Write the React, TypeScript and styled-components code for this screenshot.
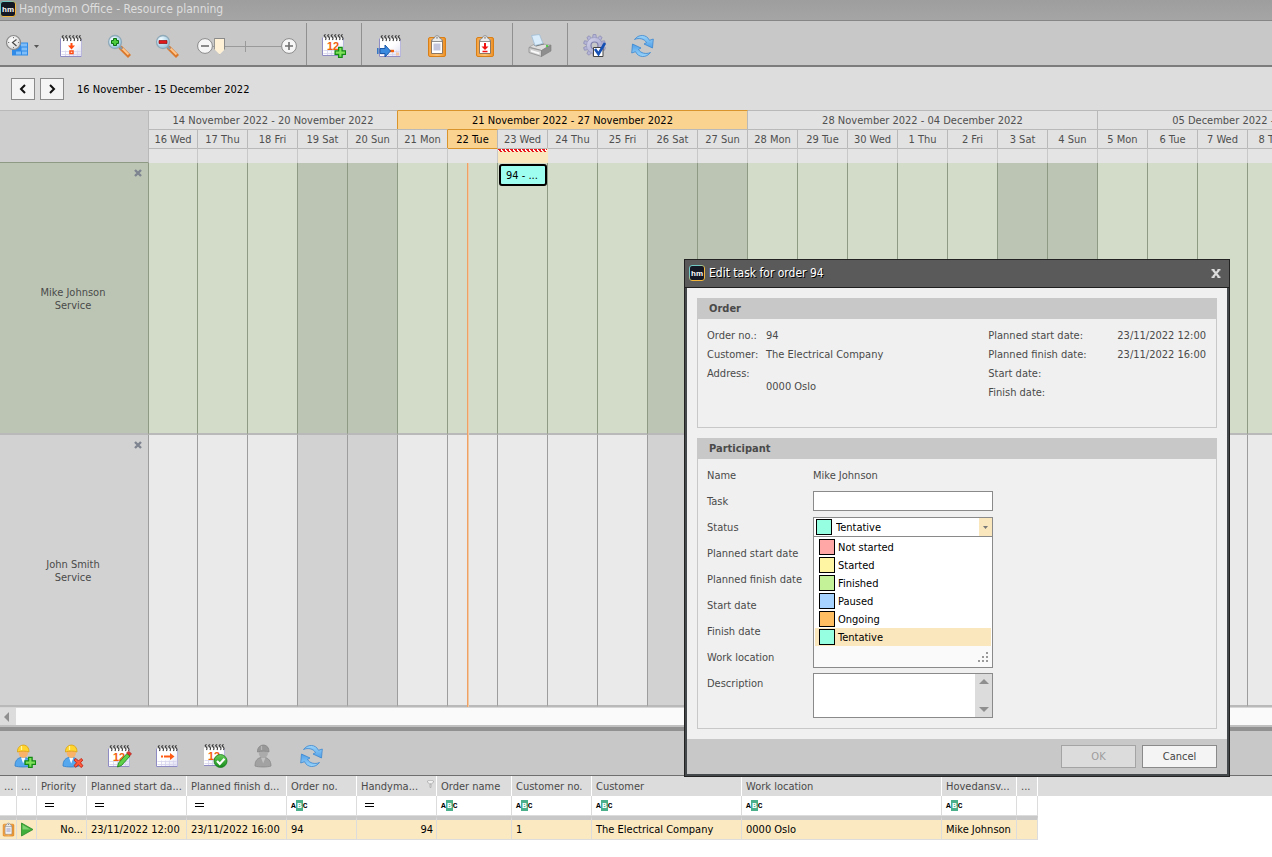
import React from "react";
import styled, { createGlobalStyle, css } from "styled-components";

const GlobalStyle = createGlobalStyle`
  * { box-sizing: border-box; }
  body {
    margin: 0;
    background: #fff;
    color: #4a4a4a;
    font-family: "DejaVu Sans Condensed", Tahoma, "DejaVu Sans", sans-serif;
    font-size: 11px;
    line-height: 13px;
  }
  button, input, select, textarea {
    font: inherit;
    color: inherit;
    margin: 0;
    border-radius: 0;
  }
`;

/* ---------- shell ---------- */

const Shell = styled.div`
  position: relative;
  display: flex;
  flex-direction: column;
  min-height: 100vh;
  overflow: hidden;
`;

const TitleBar = styled.header`
  display: flex;
  align-items: center;
  gap: 3px;
  height: 21px;
  padding-bottom: 2px;
  background: linear-gradient(#9e9e9e, #a5a5a5);
  border-bottom: 1px solid #868686;
  color: #dedede;
`;

const AppTitle = styled.h1`
  margin: 0;
  font-size: 12px;
  line-height: 16px;
  font-weight: 400;
`;

const Toolbar = styled.div<{ $lower?: boolean }>`
  display: flex;
  height: ${(p) => (p.$lower ? 49 : 46)}px;
  background: #c8c8c8;
  border-top: ${(p) => (p.$lower ? "4px solid #919191" : "none")};
  border-bottom: ${(p) => (p.$lower ? 1 : 2)}px solid #6f6f6f;
  border-bottom-color: ${(p) => (p.$lower ? "#6f6f6f" : "#7c7c7c")};
`;

const ToolGroup = styled.div<{ $pad: number; $last?: boolean }>`
  display: flex;
  align-items: center;
  margin-top: 2px;
  padding: 4px ${(p) => p.$pad}px 0;
  border-right: ${(p) => (p.$last ? "none" : "1px solid #909090")};
`;

const ToolButton = styled.button<{ $first?: boolean }>`
  display: flex;
  align-items: center;
  gap: 4px;
  width: ${(p) => (p.$first ? 47 : 48)}px;
  height: 36px;
  padding: 0 ${(p) => (p.$first ? 6 : 12)}px;
  border: 0;
  background: none;
`;

const ZoomSlider = styled.div`
  display: flex;
  align-items: center;
  width: 115px;
  padding-left: 6px;
`;

const ZoomStep = styled.button`
  display: flex;
  padding: 0;
  border: 0;
  background: none;
`;

const ZoomRange = styled.input`
  appearance: none;
  width: 68px;
  height: 20px;
  background:
    linear-gradient(#9a9a9a, #9a9a9a) 32px 50% / 1px 11px no-repeat,
    linear-gradient(#9a9a9a, #9a9a9a) 0 50% / 100% 1px no-repeat;
  &::-webkit-slider-thumb {
    appearance: none;
    width: 11px;
    height: 17px;
    background: #fff1d6;
    clip-path: polygon(0 0, 100% 0, 100% 68%, 50% 100%, 0 68%);
    box-shadow: inset 0 0 0 1px #8a8a8a;
  }
`;

const DateNav = styled.nav`
  display: flex;
  align-items: center;
  height: 43px;
  padding: 1px 11px 0;
  background: #dddddd;
  color: #000;
`;

const StepButton = styled.button`
  display: flex;
  align-items: center;
  justify-content: center;
  width: 24px;
  height: 22px;
  margin-right: 5px;
  padding: 0;
  background: #f4f4f4;
  border: 1px solid #8a8a8a;
`;

const RangeText = styled.span`
  margin-left: 8px;
`;

/* ---------- scheduler ---------- */

const Scheduler = styled.main`
  flex: 1;
  display: flex;
  flex-direction: column;
  overflow: hidden;
`;

const SchedulerRow = styled.section<{ $grow?: boolean }>`
  display: flex;
  flex: ${(p) => (p.$grow ? "1 1 0" : "none")};
`;

const Corner = styled.div`
  flex: none;
  width: 149px;
  background: #cecece;
  border: solid #b9b9b9;
  border-width: 1px 1px 0 0;
  border-bottom: 1px solid #8f9a85;
`;

const Track = styled.div`
  flex: 1;
  display: flex;
  flex-direction: column;
  min-width: 0;
  position: relative;
  overflow: hidden;
`;

const Strip = styled.div<{ $grow?: boolean }>`
  display: flex;
  flex: ${(p) => (p.$grow ? "1" : "none")};
`;

const WeekCell = styled.div<{ $days: number; $first?: boolean; $current?: boolean; $edge?: string }>`
  flex: none;
  width: ${(p) => p.$days * 50 - (p.$first ? 1 : 0)}px;
  height: 19px;
  padding-top: 3px;
  border-top: 1px solid ${(p) => (p.$current ? "#d9942b" : "#b9b9b9")};
  border-right: 1px solid ${(p) => p.$edge || "#b9b9b9"};
  background: ${(p) => (p.$current ? "#fbd391" : "#e2e2e2")};
  color: ${(p) => (p.$current ? "#000" : "#4f4f4f")};
  text-align: center;
  white-space: nowrap;
`;

const DayCell = styled.div<{ $first?: boolean; $today?: boolean; $edge?: string }>`
  flex: none;
  width: ${(p) => (p.$first ? 49 : 50)}px;
  height: 19px;
  padding-top: 3px;
  border-top: 1px solid ${(p) => (p.$today ? "#d9942b" : "#b9b9b9")};
  border-right: 1px solid ${(p) => p.$edge || "#b9b9b9"};
  background: ${(p) => (p.$today ? "#fbd391" : "#e2e2e2")};
  color: ${(p) => (p.$today ? "#000" : "#4f4f4f")};
  text-align: center;
  white-space: nowrap;
`;

const AllDayCell = styled.div<{ $first?: boolean; $today?: boolean; $selected?: boolean }>`
  flex: none;
  width: ${(p) => (p.$first ? 49 : 50)}px;
  height: 15px;
  border-top: 1px solid ${(p) => (p.$today ? "#d9942b" : "#b9b9b9")};
  border-right: 1px solid #c8c8c8;
  background: #e4e4e4;
  ${(p) =>
    p.$selected &&
    css`
      border-right-color: #fbe7bd;
      background:
        repeating-linear-gradient(90deg, #e8151b 0 3px, #fff 3px 4px) 0 0 / 100% 1px no-repeat,
        repeating-linear-gradient(90deg, #fff 0 1px, #e8151b 1px 3px, #fff 3px 4px) 0 1px / 100% 1px no-repeat,
        repeating-linear-gradient(90deg, #fbe7bd 0 2px, #e8151b 2px 4px) 0 2px / 100% 1px no-repeat,
        #fbe7bd;
    `}
`;

type Tone = "green" | "gray";
const tones = {
  green: { day: "#d3dcc9", off: "#bcc5b4", line: "#8f9a85" },
  gray: { day: "#eaeaea", off: "#d2d2d2", line: "#9d9d9d" },
};

const ResourceCell = styled.div<{ $tone: Tone }>`
  flex: none;
  display: flex;
  flex-direction: column;
  width: 149px;
  padding: 4px 5px 14px 0;
  background: ${(p) => tones[p.$tone].off};
  border-right: 1px solid ${(p) => tones[p.$tone].line};
  border-bottom: 2px solid #b9b9b9;
  text-align: center;
`;

const ResourceName = styled.div`
  display: flex;
  flex-direction: column;
  justify-content: center;
  flex: 1;
  padding-left: 3px;
`;

const RemoveButton = styled.button`
  align-self: flex-end;
  display: flex;
  width: 10px;
  height: 12px;
  padding: 2px 1px;
  border: 0;
  background: none;
`;

const TimeCell = styled.div<{ $tone: Tone; $first?: boolean; $off?: boolean }>`
  flex: none;
  width: ${(p) => (p.$first ? 49 : 50)}px;
  padding: 1px 0 0 1px;
  background: ${(p) => tones[p.$tone][p.$off ? "off" : "day"]};
  border-right: 1px solid ${(p) => tones[p.$tone].line};
  border-bottom: 2px solid #b9b9b9;
`;

const Appointment = styled.button`
  display: block;
  width: 100%;
  height: 22px;
  padding: 0 0 0 5px;
  border: 2px solid #000;
  border-radius: 3px;
  background: #9efff0;
  color: #000;
  text-align: left;
`;

/* Marks the current time over the day columns. */
const NowLine = styled.i`
  position: absolute;
  top: 0;
  bottom: 0;
  left: 318px;
  width: 2px;
  background: linear-gradient(90deg, #f0a063 50%, #efc8a4 50%);
`;

const ScrollTrack = styled.div`
  display: flex;
  height: 20px;
  background: #fafafa;
  border-top: 1px solid #d6d6d6;
  border-bottom: 2px solid #c0c0c0;
`;

const ScrollArrow = styled.button`
  display: flex;
  align-items: center;
  width: 16px;
  padding: 0 4px;
  border: 0;
  background: #dcdcdc;
`;

/* ---------- order list ---------- */

const OrderTable = styled.table`
  width: 100%;
  table-layout: fixed;
  border-spacing: 0;
  margin-bottom: 17px;
  white-space: nowrap;
`;

const HeadCell = styled.th<{ $width?: number }>`
  width: ${(p) => (p.$width ? p.$width + "px" : "auto")};
  height: 20px;
  padding: 0 0 0 4px;
  overflow: hidden;
  background: #dcdcdc;
  border-right: ${(p) => (p.$width ? "1px solid #fff" : "none")};
  font-weight: 400;
  text-align: left;
`;

const HeadContent = styled.span`
  display: flex;
  justify-content: space-between;
  padding-right: 2px;
`;

const FilterCell = styled.td<{ $filler?: boolean }>`
  height: 20px;
  padding: 0 0 0 4px;
  ${(p) => !p.$filler && "border: solid #dcdcdc; border-width: 0 1px 1px 0;"}
`;

const DataCell = styled.td<{ $right?: boolean; $icon?: boolean }>`
  height: 24px;
  padding: ${(p) => (p.$icon ? "0" : "0 3px 0 4px")};
  overflow: hidden;
  background: #fbe9c1;
  border-top: 4px solid #c8c8c8;
  border-right: 1px solid #dcdcdc;
  border-bottom: 1px solid #dcdcdc;
  color: #000;
  text-align: ${(p) => (p.$right ? "right" : "left")};
  svg { margin: 0 auto; }
`;

const TextFilter = styled.span`
  display: flex;
  align-items: center;
  height: 11px;
  color: #000;
  font-family: "Liberation Mono", monospace;
  font-size: 8px;
  font-weight: 700;
  line-height: 11px;
`;

const TextFilterKey = styled.span`
  width: 7px;
  background: #4caf8c;
  color: #fff;
  text-align: center;
`;

/* ---------- dialog ---------- */

const Dialog = styled.section`
  position: absolute;
  top: 259px;
  left: 684px;
  width: 546px;
  border: 1px solid #232323;
  background: #45484a;
`;

const DialogTitle = styled.header`
  display: flex;
  align-items: center;
  gap: 4px;
  height: 28px;
  padding: 0 8px 1px 4px;
  background: #5a5a5a;
  border-bottom: 1px solid #1f1f1f;
  color: #fff;
`;

const DialogHeading = styled.h2`
  flex: 1;
  margin: 0;
  font-size: 12px;
  line-height: 16px;
  font-weight: 400;
  text-shadow: 1px 1px 0 #000;
`;

const CloseButton = styled.button`
  display: flex;
  padding: 0;
  border: 0;
  background: none;
`;

const DialogBody = styled.div`
  display: flex;
  flex-direction: column;
  gap: 10px;
  margin: 0 2px;
  padding: 10px;
  background: #f0f0f0;
`;

const Group = styled.fieldset`
  margin: 0;
  padding: 0;
  min-width: 0;
  border: 1px solid #c8c8c8;
  border-top: 0;
`;

const GroupTitle = styled.h3`
  margin: 0;
  height: 21px;
  padding: 4px 11px;
  background: #c8c8c8;
  font-size: 11px;
  line-height: 13px;
`;

const OrderDetails = styled.div`
  display: flex;
  justify-content: space-between;
  height: 108px;
  padding: 10px 10px 0 9px;
`;

const Facts = styled.dl<{ $label: number }>`
  display: grid;
  grid-template-columns: ${(p) => p.$label}px auto;
  grid-auto-rows: 13px;
  row-gap: 6px;
  margin: 0;
`;

const FactValue = styled.dd`
  margin: 0;
  white-space: pre;
`;

const FormRows = styled.div`
  display: grid;
  grid-template-columns: 106px 180px;
  grid-auto-rows: 26px;
  padding: 3px 9px 6px;
`;

const FieldLabel = styled.label`
  padding-top: 7px;
`;

const FieldText = styled.output`
  padding-top: 7px;
`;

const TextField = styled.input`
  height: 20px;
  margin-top: 3px;
  padding: 0 4px;
  border: 1px solid #8a8a8a;
  background: #fff;
`;

const StatusField = styled.div`
  position: relative;
  height: 20px;
  margin-top: 3px;
  color: #000;
`;

const StatusSelect = styled.select`
  appearance: none;
  display: block;
  width: 100%;
  height: 20px;
  padding: 0 14px 0 22px;
  border: 1px solid #8a8a8a;
  outline: 0;
  background: #fff;
`;

const Swatch = styled.i<{ $color: string }>`
  width: 16px;
  height: 16px;
  border: 1px solid #000;
  background: ${(p) => p.$color};
`;

const FieldSwatch = styled(Swatch)`
  position: absolute;
  top: 2px;
  left: 3px;
`;

const DropMark = styled.span`
  position: absolute;
  top: 1px;
  right: 1px;
  display: flex;
  align-items: center;
  justify-content: center;
  width: 13px;
  height: 18px;
  background: #fbe7bd;
  pointer-events: none;
`;

const StatusPopup = styled.div`
  position: absolute;
  z-index: 1;
  top: 19px;
  left: 0;
  right: 0;
  border: 1px solid #8a8a8a;
  background: #fff;
`;

const StatusOptions = styled.ul`
  margin: 0;
  padding: 1px 1px 0;
  list-style: none;
`;

const StatusOption = styled.li<{ $active?: boolean }>`
  display: flex;
  align-items: center;
  gap: 3px;
  height: 18px;
  padding-left: 4px;
  background: ${(p) => (p.$active ? "#fbe7bd" : "#fff")};
`;

const PopupFoot = styled.div`
  display: flex;
  justify-content: flex-end;
  align-items: flex-end;
  height: 21px;
  padding: 4px;
  background: #fafafa;
`;

const Description = styled.div`
  display: flex;
  height: 45px;
  margin-top: 3px;
  border: 1px solid #8a8a8a;
  background: #fff;
`;

const DescriptionText = styled.textarea`
  flex: 1;
  min-width: 0;
  padding: 2px 4px;
  border: 0;
  resize: none;
  background: #fff;
`;

const DescriptionScroll = styled.div`
  display: flex;
  flex-direction: column;
  justify-content: space-between;
  align-items: center;
  width: 17px;
  padding: 5px 0;
  background: #dcdcdc;
`;

const DescriptionSpan = styled.div`
  grid-row: span 2;
`;

const DialogFoot = styled.footer`
  display: flex;
  justify-content: flex-end;
  gap: 6px;
  height: 35px;
  margin: 0 2px 2px;
  padding: 6px 10px 0;
  background: #c8c8c8;
`;

const DialogButton = styled.button`
  width: 75px;
  height: 23px;
  padding: 0;
  border: 1px solid #8a8a8a;
  background: #f4f4f4;
  color: #444;
  &:disabled {
    border-color: #a4a4a4;
    background: #dcdcdc;
    color: #9c9c9c;
  }
`;

/* ---------- icons ---------- */

const Svg = styled.svg`
  flex: none;
  display: block;
`;

const HiddenSvg = styled.svg`
  position: absolute;
`;

const Icon = ({ children, size = 24 }: { children: React.ReactNode; size?: number }) => (
  <Svg width={size} height={size} viewBox="0 0 24 24" fill="none" aria-hidden="true">
    {children}
  </Svg>
);

const Defs = () => (
  <HiddenSvg width="0" height="0" aria-hidden="true">
    <defs>
      <linearGradient id="frame" x1="0" y1="0" x2="1" y2="1">
        <stop offset="0.3" stopColor="#6fc8c4" />
        <stop offset="0.6" stopColor="#f2b63c" />
      </linearGradient>
      <linearGradient id="page" x1="0" y1="0" x2="1" y2="1">
        <stop offset="0.5" stopColor="#ffffff" />
        <stop offset="1" stopColor="#dcdcf2" />
      </linearGradient>
      <linearGradient id="blue" x1="0" y1="0" x2="0" y2="1">
        <stop offset="0" stopColor="#9ad4fa" />
        <stop offset="1" stopColor="#4f9fe8" />
      </linearGradient>
      <linearGradient id="orange" x1="0" y1="0" x2="1" y2="0">
        <stop offset="0" stopColor="#f6a03c" />
        <stop offset="0.5" stopColor="#fcc070" />
        <stop offset="1" stopColor="#ee8f22" />
      </linearGradient>
      <radialGradient id="lens" cx="0.35" cy="0.3" r="0.8">
        <stop offset="0" stopColor="#f4fbff" />
        <stop offset="1" stopColor="#8cc0dc" />
      </radialGradient>
      <radialGradient id="face" cx="0.4" cy="0.35" r="0.7">
        <stop offset="0" stopColor="#fff" />
        <stop offset="1" stopColor="#d6d6d6" />
      </radialGradient>
      <linearGradient id="metal" x1="0" y1="0" x2="1" y2="1">
        <stop offset="0" stopColor="#d6d6ec" />
        <stop offset="1" stopColor="#9c9cc6" />
      </linearGradient>
      <linearGradient id="green" x1="0" y1="0" x2="0" y2="1">
        <stop offset="0" stopColor="#6ad05a" />
        <stop offset="1" stopColor="#15891c" />
      </linearGradient>
    </defs>
  </HiddenSvg>
);

const Logo = () => (
  <Svg width="16" height="16" viewBox="0 0 16 16" role="img" aria-label="hm">
    <rect x="0.5" y="0.5" width="15" height="15" rx="2.5" fill="#141824" stroke="url(#frame)" />
    <text x="8" y="10.5" textAnchor="middle" fontSize="8" fontWeight="700" fill="#fff" fontFamily="Liberation Sans, sans-serif">
      hm
    </text>
  </Svg>
);

const Page = () => (
  <>
    <path d="M1.500 4.500h21v18.500h-21z" fill="url(#page)" />
    <path d="M1.500 4.500v18h21" stroke="#8f8cc4" />
    <path d="M22.500 5v17.500" stroke="#b9b8dc" />
    <path d="M2.500 17.500h19M2.500 20.500h19M6.500 16.500v5.500M10.500 16.500v5.500M14.500 16.500v5.500M18.500 16.500v5.500" stroke="#d5d3ee" strokeWidth="0.800" />
    <path d="M4.500 7c.8-1.500.5-3-.8-3.600-1-.6-.2-2 1-1.600M8 7c.8-1.500.5-3-.8-3.600-1-.6-.2-2 1-1.600M11.500 7c.8-1.500.5-3-.8-3.600-1-.6-.2-2 1-1.600M15 7c.8-1.500.5-3-.8-3.600-1-.6-.2-2 1-1.600M18.500 7c.8-1.500.5-3-.8-3.600-1-.6-.2-2 1-1.600M21.500 7c.8-1.500.5-3-.8-3.600-1-.6-.2-2 1-1.600" stroke="#333" strokeWidth="1.100" />
  </>
);

const Twelve = () => (
  <text x="6" y="16.500" fontSize="11" fontWeight="700" fill="#f2600c" fontFamily="Liberation Sans, sans-serif">
    12
  </text>
);

const Plus = () => (
  <path d="M17.500 14h3.500v3.500h3.500v3.500h-3.500v3h-3.500v-3h-3.500v-3.500h3.500z" fill="#7fe05a" stroke="#128a14" strokeWidth="1.300" transform="translate(-0.900 -0.700)" />
);

const ViewIcon = () => (
  <Icon>
    <path d="M9 8.500h13v13h-16v-6z" fill="#2f8ae8" />
    <path d="M15 9.500h6v3h-6zM15.500 13.500h5.500v3h-5.500zM10 17.500h5v3h-5zM16 17.500h5v3h-5z" fill="#7fbdf8" />
    <circle cx="7.500" cy="8.500" r="7" fill="url(#face)" stroke="#8b8b8b" strokeWidth="1.200" />
    <path d="M10.500 5.500l-4 3 4 3.500" stroke="#4a4a4a" strokeWidth="1.200" />
    <path d="M7.500 3v1.200M7.500 13v1.200M2 8.500h1.200M12 8.500h1.200" stroke="#777" />
  </Icon>
);

const CalendarTodayIcon = () => (
  <Icon>
    <Page />
    <path d="M12.500 9v4" stroke="#ff4a10" strokeWidth="2" />
    <path d="M9 11.500l3.500 4 3.500-4z" fill="#ff4a10" />
    <path d="M11 17h3v2.500h-3z" stroke="#ff4a10" strokeWidth="1.400" fill="#fff" />
  </Icon>
);

const ZoomIcon = ({ minus }: { minus?: boolean }) => (
  <Icon>
    <path d="M14.500 14.500l6.500 6.500" stroke="#d9772a" strokeWidth="4.200" strokeLinecap="square" />
    <path d="M15.500 14.500l6 6" stroke="#ffc58a" strokeWidth="1.800" />
    <path d="M12.500 12.500l2.500 2.500" stroke="#8a98a6" strokeWidth="2.500" />
    <circle cx="8" cy="8" r="6.500" fill="url(#lens)" stroke="#8fa9b8" strokeWidth="1.300" />
    {minus ? (
      <path d="M4 6.500h8v3h-8z" fill="#e0181c" stroke="#8c0d10" strokeWidth="0.700" />
    ) : (
      <path d="M6.500 4.500h3v2h2v3h-2v2h-3v-2h-2v-3h2z" fill="#4ccc3c" stroke="#0a7012" />
    )}
  </Icon>
);

const CalendarAddIcon = () => (
  <Icon>
    <g transform="translate(-1 -1)">
      <Page />
      <Twelve />
    </g>
    <Plus />
  </Icon>
);

const CalendarMoveIcon = () => (
  <Icon>
    <g transform="translate(1 0)">
      <Page />
    </g>
    <path d="M13 17h4" stroke="#f2600c" strokeWidth="2.400" />
    <path d="M19 18.500h3v3h-3z" fill="#f3c7a8" />
    <path d="M3 14.500h5v-3.500l5.500 6-5.500 6v-3.500h-5z" fill="#3a8ae0" stroke="#1a58a8" />
    <path d="M0.800 14v6" stroke="#2f72c4" strokeWidth="1.500" />
  </Icon>
);

const ClipboardIcon = ({ arrow, size }: { arrow?: boolean; size?: number }) => (
  <Icon size={size}>
    <rect x="3.500" y="3.500" width="17" height="19" rx="1.500" fill="url(#orange)" stroke="#d97f18" />
    <path d="M6.500 6.500h11v13h-11z" fill="#fff" stroke="#8d7760" />
    {arrow ? (
      <>
        <path d="M12 9v5" stroke="#f01010" strokeWidth="2" />
        <path d="M8.500 12.500h7l-3.500 3.500z" fill="#f01010" />
        <path d="M9.500 17.500h5" stroke="#f01010" strokeWidth="1.500" />
      </>
    ) : (
      <path d="M8.500 9.500h7v7h-7z" fill="#c3c6dc" />
    )}
    <path d="M7 7.500v-2l2.500-1.500c0-3 5-3 5 0l2.500 1.500v2z" fill="#e9e9e9" stroke="#868686" strokeWidth="0.900" />
    <circle cx="12" cy="3.800" r="0.900" fill="#8d8d8d" />
  </Icon>
);

const PrinterIcon = () => (
  <Icon>
    <path d="M1.500 13l6.500-4 14.500 2-9 5.500z" fill="#dedede" stroke="#9a9a9a" strokeWidth="0.700" />
    <path d="M5.500 11l9.500-1.500 1.500.8-8.500 2.200z" fill="#6f6f6f" />
    <path d="M3.500 1.500l8-1 3.500 9-8 2z" fill="#d9ecfb" stroke="#9fbdd4" strokeWidth="0.800" />
    <path d="M1 13.500l12.500 3v6l-12.500-4z" fill="#d0d0d0" stroke="#858585" strokeWidth="0.700" />
    <path d="M13.500 16.500l9.500-5.500v6l-9.500 5.500z" fill="#8e8e8e" stroke="#7c7c7c" strokeWidth="0.600" />
    <path d="M3 16l8.500 2.500v2l-8.500-2.700z" fill="#fafafa" />
    <path d="M18 11.800l2.200.3" stroke="#45c93a" strokeWidth="1.800" />
  </Icon>
);

const TEETH = [0, 36, 72, 108, 144, 180, 216, 252, 288, 324];
const GearIcon = () => (
  <Icon>
    {TEETH.map((a) => (
      <path key={a} d="M9.500 4.500l.6-4h2.800l.6 4z" fill="#b4b4d6" stroke="#8a8ab4" strokeWidth="0.700" transform={`rotate(${a} 11.500 11.500)`} />
    ))}
    <circle cx="11.500" cy="11.500" r="8" fill="url(#metal)" stroke="#9292ba" strokeWidth="0.600" />
    <circle cx="11.500" cy="11.500" r="3.500" fill="#c8c8c8" stroke="#7f7fac" strokeWidth="1.200" />
    <path d="M10.500 13.500h9.500v9h-9.500z" fill="#fff" stroke="#444" />
    <path d="M12 15l3.500 5 6.500-11" stroke="#1450b4" strokeWidth="2.600" />
  </Icon>
);

const RefreshArrow = () => (
  <path d="M3.500 5.500c4-5.500 12-5.500 15 .8l3.800-1.300-.8 9-8.500-4 2.500-1.300c-2-4-7.500-5.200-12-3.200z" fill="url(#blue)" stroke="#3b86cf" strokeWidth="0.800" strokeLinejoin="round" />
);

const RefreshIcon = () => (
  <Icon>
    <RefreshArrow />
    <g transform="rotate(180 11.500 12)">
      <RefreshArrow />
    </g>
  </Icon>
);

const Worker = ({ muted }: { muted?: boolean }) => (
  <>
    <path d="M2 22.500c0-6 3-8 6-8.500h4c3 .5 6 3 6 8.500-3 1.300-13 1.300-16 0z" fill={muted ? "#a2a2a2" : "#55a8ee"} stroke={muted ? "#8a8a8a" : "#2f7fca"} strokeWidth="0.800" />
    <path d="M8 14l2.200 6 2.300-6z" fill={muted ? "#c2c2c2" : "#f6fbff"} />
    <ellipse cx="10.300" cy="9.500" rx="4.600" ry="5" fill={muted ? "#ababab" : "#f8b26a"} />
    <path d="M4.500 8.500c-.5-9 12-9.500 11.500 0-3-1.200-8-1.200-11.500 0z" fill={muted ? "#989898" : "#ffd52e"} stroke={muted ? "#868686" : "#d9a010"} strokeWidth="0.800" />
    <path d="M8.500 2.500v4" stroke={muted ? "#b8b8b8" : "#fff3a6"} strokeWidth="1.200" />
  </>
);

const WorkerAddIcon = () => (
  <Icon>
    <g transform="translate(1 -0.500)">
      <Worker />
    </g>
    <Plus />
  </Icon>
);

const WorkerRemoveIcon = () => (
  <Icon>
    <g transform="translate(1 -0.500)">
      <Worker />
    </g>
    <path d="M14 16l2-1.500 2.500 2.500 2.500-2.500 1.800 1.500-2.300 2.800 2.500 3-2 1.700-2.500-2.700-2.700 2.500-1.800-1.700 2.500-2.800z" fill="#ff5a3c" stroke="#c42010" strokeWidth="0.900" />
  </Icon>
);

const WorkerIcon = () => (
  <Icon>
    <g transform="translate(1 -0.500)">
      <Worker muted />
    </g>
  </Icon>
);

const CalendarEditIcon = () => (
  <Icon>
    <g transform="translate(-1 0)">
      <Page />
      <Twelve />
    </g>
    <path d="M19 9.500l3 2.500-8.500 9.500-4 1.500 1-4z" fill="#5fd04a" stroke="#1d8a1c" strokeWidth="0.900" />
    <path d="M18.500 9l2-1.800 3 2.500-1.500 2z" fill="#e0392c" stroke="#a81d14" strokeWidth="0.600" />
  </Icon>
);

const CalendarForwardIcon = () => (
  <Icon>
    <g transform="translate(-1 0)">
      <Page />
    </g>
    <path d="M5 12.500h2M8 12.500h7" stroke="#ff5a14" strokeWidth="2" />
    <path d="M14 9l4.500 3.500-4.500 3.500z" fill="#ff5a14" />
  </Icon>
);

const CalendarDoneIcon = () => (
  <Icon>
    <g transform="translate(-2 -1)">
      <Page />
      <Twelve />
    </g>
    <circle cx="16.500" cy="17" r="6.500" fill="url(#green)" stroke="#187a1c" strokeWidth="0.800" />
    <path d="M13 17l2.800 2.800 4.700-5" stroke="#fff" strokeWidth="2.200" />
  </Icon>
);

const Triangle = ({ points, w, h, fill = "#8f8f8f" }: { points: string; w: number; h: number; fill?: string }) => (
  <Svg width={w} height={h} aria-hidden="true">
    <polygon points={points} fill={fill} />
  </Svg>
);

const RoundStep = ({ plus }: { plus?: boolean }) => (
  <Svg width="16" height="16" viewBox="0 0 16 16" aria-hidden="true">
    <circle cx="8" cy="8" r="7.400" fill="#f6f6f6" stroke="#8a8a8a" />
    <path d={plus ? "M4 8h8M8 4v8" : "M4 8h8"} stroke="#6f6f6f" strokeWidth="1.600" />
  </Svg>
);

const Chevron = ({ d }: { d: string }) => (
  <Svg width="8" height="10" viewBox="0 0 8 10" fill="none" aria-hidden="true">
    <path d={d} stroke="#111" strokeWidth="2" />
  </Svg>
);

const CrossIcon = () => (
  <Svg width="8" height="8" viewBox="0 0 8 8" aria-hidden="true">
    <path d="M1 1l6 6M7 1l-6 6" stroke="#7e8490" strokeWidth="2.400" />
  </Svg>
);

const CloseIcon = () => (
  <Svg width="10" height="9" viewBox="0 0 10 9" aria-hidden="true">
    <path d="M2 1l6 7M8 1l-6 7" stroke="#dcdcdc" strokeWidth="2.200" />
    <path d="M0.500 0.800h3M6.500 0.800h3M0.500 8.200h3M6.500 8.200h3" stroke="#dcdcdc" strokeWidth="1.400" />
  </Svg>
);

const EqualsIcon = () => (
  <Svg width="17" height="5" aria-hidden="true">
    <path d="M4 0h9v1h-9zM4 3h9v1h-9z" fill="#000" />
  </Svg>
);

const FunnelIcon = () => (
  <Svg width="7" height="8" viewBox="0 0 7 8" fill="none" aria-hidden="true">
    <path d="M0.500 1c0-.8 6-.8 6 0v1l-2 2h-2l-2-2zM3 4h1v3.500h-1z" stroke="#b4b4b4" fill="#f0f0f0" />
  </Svg>
);

const PlayIcon = () => (
  <Svg width="14" height="15" viewBox="0 0 14 15" aria-hidden="true">
    <path d="M1.500 1l11.500 6.500-11.500 6.500z" fill="#3fae3a" stroke="#2a8a2a" strokeWidth="0.800" />
    <path d="M2.500 2.800l8 4.700h-8z" fill="#7ed070" />
  </Svg>
);

const GripIcon = () => (
  <Svg width="11" height="11" aria-hidden="true">
    <path d="M9 0h2v2h-2zM5 4h2v2h-2zM9 4h2v2h-2zM1 8h2v2h-2zM5 8h2v2h-2zM9 8h2v2h-2z" fill="#9a9a9a" />
  </Svg>
);

/* ---------- data ---------- */

const weeks = [
  { text: "14 November 2022 - 20 November 2022", days: 5 },
  { text: "21 November 2022 - 27 November 2022", days: 7 },
  { text: "28 November 2022 - 04 December 2022", days: 7 },
  { text: "05 December 2022 - 11 December 2022", days: 7 },
];

const days = [
  "16 Wed", "17 Thu", "18 Fri", "19 Sat", "20 Sun", "21 Mon", "22 Tue", "23 Wed", "24 Thu", "25 Fri",
  "26 Sat", "27 Sun", "28 Mon", "29 Tue", "30 Wed", "1 Thu", "2 Fri", "3 Sat", "4 Sun", "5 Mon",
  "6 Tue", "7 Wed", "8 Thu", "9 Fri", "10 Sat", "11 Sun",
];
const TODAY = 6;
const TASK_DAY = 7;

const resources: { name: string; tone: Tone; task?: string }[] = [
  { name: "Mike Johnson", tone: "green", task: "94 - ..." },
  { name: "John Smith", tone: "gray" },
];

const statuses = [
  { name: "Not started", color: "#ffa6a6" },
  { name: "Started", color: "#fff5a3" },
  { name: "Finished", color: "#c3f299" },
  { name: "Paused", color: "#a6d3ff" },
  { name: "Ongoing", color: "#ffbe62" },
  { name: "Tentative", color: "#96ffe1" },
];

type Column = { title: string; width: number; filter?: "eq" | "abc"; value: React.ReactNode; right?: boolean; icon?: boolean; funnel?: boolean };
const columns: Column[] = [
  { title: "...", width: 17, value: <ClipboardIcon size={15} />, icon: true },
  { title: "...", width: 20, value: <PlayIcon />, icon: true },
  { title: "Priority", width: 50, filter: "eq", value: "No...", right: true },
  { title: "Planned start da...", width: 100, filter: "eq", value: "23/11/2022 12:00" },
  { title: "Planned finish d...", width: 100, filter: "eq", value: "23/11/2022 16:00" },
  { title: "Order no.", width: 70, filter: "abc", value: "94" },
  { title: "Handyma...", width: 80, filter: "eq", value: "94", right: true, funnel: true },
  { title: "Order name", width: 75, filter: "abc", value: "" },
  { title: "Customer no.", width: 80, filter: "abc", value: "1" },
  { title: "Customer", width: 150, filter: "abc", value: "The Electrical Company" },
  { title: "Work location", width: 200, filter: "abc", value: "0000 Oslo" },
  { title: "Hovedansv...", width: 75, filter: "abc", value: "Mike Johnson" },
  { title: "...", width: 21, value: "" },
];

/* ---------- sections ---------- */

const MainToolbar = () => (
  <Toolbar role="toolbar" aria-label="Planning">
    <ToolGroup $pad={0}>
      <ToolButton $first aria-label="View">
        <ViewIcon />
        <Triangle w={5} h={3} points="0,0 5,0 2.5,3" fill="#555" />
      </ToolButton>
      <ToolButton aria-label="Go to today"><CalendarTodayIcon /></ToolButton>
      <ToolButton aria-label="Zoom in"><ZoomIcon /></ToolButton>
      <ToolButton aria-label="Zoom out"><ZoomIcon minus /></ToolButton>
      <ZoomSlider>
        <ZoomStep aria-label="Less"><RoundStep /></ZoomStep>
        <ZoomRange type="range" aria-label="Zoom level" min={0} max={100} defaultValue={2} />
        <ZoomStep aria-label="More"><RoundStep plus /></ZoomStep>
      </ZoomSlider>
    </ToolGroup>
    <ToolGroup $pad={3}>
      <ToolButton aria-label="New task"><CalendarAddIcon /></ToolButton>
    </ToolGroup>
    <ToolGroup $pad={3}>
      <ToolButton aria-label="Go to date"><CalendarMoveIcon /></ToolButton>
      <ToolButton aria-label="Orders"><ClipboardIcon /></ToolButton>
      <ToolButton aria-label="Fetch order"><ClipboardIcon arrow /></ToolButton>
    </ToolGroup>
    <ToolGroup $pad={3}>
      <ToolButton aria-label="Print"><PrinterIcon /></ToolButton>
    </ToolGroup>
    <ToolGroup $pad={3} $last>
      <ToolButton aria-label="Settings"><GearIcon /></ToolButton>
      <ToolButton aria-label="Refresh"><RefreshIcon /></ToolButton>
    </ToolGroup>
  </Toolbar>
);

const Planner = () => (
  <Scheduler>
    <SchedulerRow>
      <Corner />
      <Track>
        <Strip>
          {weeks.map((w, i) => (
            <WeekCell key={w.text} $days={w.days} $first={i === 0} $current={i === 1} $edge={i === 0 ? "#d9942b" : undefined}>
              {w.text}
            </WeekCell>
          ))}
        </Strip>
        <Strip>
          {days.map((d, i) => (
            <DayCell key={d} $first={i === 0} $today={i === TODAY} $edge={i === TODAY - 1 ? "#d9942b" : undefined}>
              {d}
            </DayCell>
          ))}
        </Strip>
        <Strip>
          {days.map((d, i) => (
            <AllDayCell key={d} $first={i === 0} $today={i === TODAY} $selected={i === TASK_DAY} />
          ))}
        </Strip>
      </Track>
    </SchedulerRow>
    {resources.map((r) => (
      <SchedulerRow key={r.name} $grow>
        <ResourceCell $tone={r.tone}>
          <RemoveButton aria-label={"Remove " + r.name}><CrossIcon /></RemoveButton>
          <ResourceName>
            <span>{r.name}</span>
            <span>Service</span>
          </ResourceName>
        </ResourceCell>
        <Track>
          <Strip $grow>
            {days.map((d, i) => (
              <TimeCell key={d} $tone={r.tone} $first={i === 0} $off={/Sat|Sun/.test(d)}>
                {r.task && i === TASK_DAY && <Appointment>{r.task}</Appointment>}
              </TimeCell>
            ))}
          </Strip>
          <NowLine />
        </Track>
      </SchedulerRow>
    ))}
    <ScrollTrack>
      <ScrollArrow aria-label="Scroll left"><Triangle w={5} h={10} points="5,0 5,10 0,5" /></ScrollArrow>
    </ScrollTrack>
  </Scheduler>
);

const OrderList = () => (
  <OrderTable>
    <thead>
      <tr>
        {columns.map((c, i) => (
          <HeadCell key={i} $width={c.width} scope="col">
            {c.funnel ? <HeadContent>{c.title}<FunnelIcon /></HeadContent> : c.title}
          </HeadCell>
        ))}
        <HeadCell aria-hidden="true" />
      </tr>
    </thead>
    <tbody>
      <tr>
        {columns.map((c, i) => (
          <FilterCell key={i}>
            {c.filter === "eq" && <EqualsIcon />}
            {c.filter === "abc" && <TextFilter>A<TextFilterKey>B</TextFilterKey>C</TextFilter>}
          </FilterCell>
        ))}
        <FilterCell $filler />
      </tr>
      <tr>
        {columns.map((c, i) => (
          <DataCell key={i} $right={c.right} $icon={c.icon}>{c.value}</DataCell>
        ))}
        <td />
      </tr>
    </tbody>
  </OrderTable>
);

const TaskDialog = () => (
  <Dialog role="dialog" aria-labelledby="dialog-title">
    <DialogTitle>
      <Logo />
      <DialogHeading id="dialog-title">Edit task for order 94</DialogHeading>
      <CloseButton aria-label="Close"><CloseIcon /></CloseButton>
    </DialogTitle>
    <DialogBody>
      <Group>
        <GroupTitle>Order</GroupTitle>
        <OrderDetails>
          <Facts $label={59}>
            <dt>Order no.:</dt><FactValue>94</FactValue>
            <dt>Customer:</dt><FactValue>The Electrical Company</FactValue>
            <dt>Address:</dt><FactValue>{"\n0000 Oslo"}</FactValue>
          </Facts>
          <Facts $label={129}>
            <dt>Planned start date:</dt><FactValue>23/11/2022 12:00</FactValue>
            <dt>Planned finish date:</dt><FactValue>23/11/2022 16:00</FactValue>
            <dt>Start date:</dt><FactValue />
            <dt>Finish date:</dt><FactValue />
          </Facts>
        </OrderDetails>
      </Group>
      <Group>
        <GroupTitle>Participant</GroupTitle>
        <FormRows>
          <FieldLabel htmlFor="name">Name</FieldLabel>
          <FieldText id="name">Mike Johnson</FieldText>
          <FieldLabel htmlFor="task">Task</FieldLabel>
          <TextField id="task" type="text" />
          <FieldLabel htmlFor="status">Status</FieldLabel>
          <StatusField>
            <StatusSelect id="status" defaultValue="Tentative">
              {statuses.map((s) => <option key={s.name}>{s.name}</option>)}
            </StatusSelect>
            <FieldSwatch $color="#96ffe1" />
            <DropMark><Triangle w={5} h={3} points="0,0 5,0 2.5,3" fill="#777" /></DropMark>
            <StatusPopup>
              <StatusOptions role="listbox" aria-label="Status">
                {statuses.map((s) => (
                  <StatusOption key={s.name} role="option" aria-selected={s.name === "Tentative"} $active={s.name === "Tentative"}>
                    <Swatch $color={s.color} />
                    {s.name}
                  </StatusOption>
                ))}
              </StatusOptions>
              <PopupFoot><GripIcon /></PopupFoot>
            </StatusPopup>
          </StatusField>
          <FieldLabel htmlFor="pstart">Planned start date</FieldLabel>
          <TextField id="pstart" type="text" />
          <FieldLabel htmlFor="pfinish">Planned finish date</FieldLabel>
          <TextField id="pfinish" type="text" />
          <FieldLabel htmlFor="start">Start date</FieldLabel>
          <TextField id="start" type="text" />
          <FieldLabel htmlFor="finish">Finish date</FieldLabel>
          <TextField id="finish" type="text" />
          <FieldLabel htmlFor="location">Work location</FieldLabel>
          <TextField id="location" type="text" />
          <FieldLabel htmlFor="description">Description</FieldLabel>
          <DescriptionSpan>
            <Description>
              <DescriptionText id="description" />
              <DescriptionScroll>
                <Triangle w={10} h={5} points="5,0 10,5 0,5" />
                <Triangle w={10} h={5} points="0,0 10,0 5,5" />
              </DescriptionScroll>
            </Description>
          </DescriptionSpan>
        </FormRows>
      </Group>
    </DialogBody>
    <DialogFoot>
      <DialogButton disabled>OK</DialogButton>
      <DialogButton>Cancel</DialogButton>
    </DialogFoot>
  </Dialog>
);

export default function App() {
  return (
    <Shell>
      <GlobalStyle />
      <Defs />
      <TitleBar>
        <Logo />
        <AppTitle>Handyman Office - Resource planning</AppTitle>
      </TitleBar>
      <MainToolbar />
      <DateNav aria-label="Dates">
        <StepButton aria-label="Previous"><Chevron d="M6 1l-4 4 4 4" /></StepButton>
        <StepButton aria-label="Next"><Chevron d="M2 1l4 4-4 4" /></StepButton>
        <RangeText>16 November - 15 December 2022</RangeText>
      </DateNav>
      <Planner />
      <Toolbar $lower role="toolbar" aria-label="Orders">
        <ToolGroup $pad={0} $last>
          <ToolButton aria-label="Add participant"><WorkerAddIcon /></ToolButton>
          <ToolButton aria-label="Remove participant"><WorkerRemoveIcon /></ToolButton>
          <ToolButton aria-label="Edit task"><CalendarEditIcon /></ToolButton>
          <ToolButton aria-label="Move task"><CalendarForwardIcon /></ToolButton>
          <ToolButton aria-label="Finish task"><CalendarDoneIcon /></ToolButton>
          <ToolButton aria-label="Participant" disabled><WorkerIcon /></ToolButton>
          <ToolButton aria-label="Refresh orders"><RefreshIcon /></ToolButton>
        </ToolGroup>
      </Toolbar>
      <OrderList />
      <TaskDialog />
    </Shell>
  );
}
